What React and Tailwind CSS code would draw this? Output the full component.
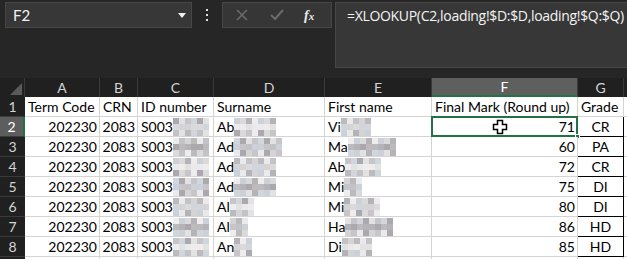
import React from 'react';

const FONT = { fontFamily: 'Lato, "Liberation Sans", sans-serif' };

const COLS = [
  { key: 'A', w: 'w-[75px]' },
  { key: 'B', w: 'w-[38px]' },
  { key: 'C', w: 'w-[76px]' },
  { key: 'D', w: 'w-[111px]' },
  { key: 'E', w: 'w-[107px]' },
  { key: 'F', w: 'w-[146px]' },
  { key: 'G', w: 'w-[46px]' },
  { key: '', w: 'w-[20px]' },
];

const MOSAIC = [
  'bg-[#d6d6da]', 'bg-[#c2bfc5]', 'bg-[#e8e8ea]', 'bg-[#aeabb1]', 'bg-[#cdd2d9]',
  'bg-[#bdbcc0]', 'bg-[#eeebec]', 'bg-[#a39fa6]', 'bg-[#d2cfd0]', 'bg-[#c7ccd4]',
  'bg-[#e1dfe0]', 'bg-[#b6b3b8]',
];

// pixelated blur that hides names
function Blur({ w, seed }) {
  const cols = Math.ceil(w / 6);
  const cells = [];
  for (let r = 0; r < 3; r++) {
    for (let c = 0; c < cols; c++) {
      cells.push(MOSAIC[(seed * 7 + r * 5 + c * 3 + ((c * r) % 4)) % MOSAIC.length]);
    }
  }
  return (
    <span className="inline-flex flex-wrap h-[18px] overflow-hidden align-middle opacity-90" style={{ width: cols * 6 }}>
      {cells.map((cls, i) => (
        <span key={i} className={`w-[6px] h-[6px] ${cls}`} />
      ))}
    </span>
  );
}

const rows = [
  { n: 2, sur: 'Ab', sw: 38, first: 'Vi', fw: 26, mark: 71, grade: 'CR' },
  { n: 3, sur: 'Ad', sw: 44, first: 'Ma', fw: 44, mark: 60, grade: 'PA' },
  { n: 4, sur: 'Ad', sw: 38, first: 'Ab', fw: 32, mark: 72, grade: 'CR' },
  { n: 5, sur: 'Ad', sw: 38, first: 'Mi', fw: 18, mark: 75, grade: 'DI' },
  { n: 6, sur: 'Al', sw: 20, first: 'Mi', fw: 32, mark: 80, grade: 'DI' },
  { n: 7, sur: 'Al', sw: 14, first: 'Ha', fw: 44, mark: 86, grade: 'HD' },
  { n: 8, sur: 'An', sw: 14, first: 'Di', fw: 30, mark: 85, grade: 'HD' },
];

function Cell({ w, className = '', children }) {
  return (
    <div className={`${w} h-full shrink-0 flex items-center border-r border-b border-[#d4d4d4] bg-white overflow-hidden whitespace-nowrap ${className}`}>
      {children}
    </div>
  );
}

function RowHead({ n, active }) {
  return (
    <div
      className={`w-[25px] h-full shrink-0 flex items-center justify-center text-[14px] border-b border-[#3a3a3a] ${
        active ? 'bg-[#5d5d5d] text-white border-r-2 border-r-[#217346]' : 'bg-[#202020] text-[#d4d4d4]'
      }`}
    >
      {n}
    </div>
  );
}

function Cursor() {
  return (
    <svg width="16" height="16" viewBox="0 0 16 16" className="absolute left-[60px] top-[2px]">
      <path
        d="M5.5 1.5h5v4h4v5h-4v4h-5v-4h-4v-5h4z"
        fill="#fff"
        stroke="#000"
        strokeWidth="1.5"
        strokeLinejoin="miter"
      />
    </svg>
  );
}

export default function App() {
  return (
    <div className="w-[627px] h-[259px] overflow-hidden bg-[#262626] text-black" style={FONT}>
      {/* toolbar */}
      <div className="flex items-start pt-[2px] h-[68px]">
        <div className="ml-[5px] w-[187px] h-[26px] shrink-0 bg-[#373737] border border-[#474747] flex items-center justify-between pl-[7px] pr-[5px]">
          <span className="text-[#f2f2f2] text-[15px]">F2</span>
          <svg width="8" height="5" viewBox="0 0 8 5"><path d="M0 0h8L4 5z" fill="#f0f0f0" /></svg>
        </div>
        <div className="w-[30px] h-[26px] shrink-0 flex flex-col items-center justify-center gap-[3px]">
          <span className="w-[2px] h-[2px] bg-[#e0e0e0]" />
          <span className="w-[2px] h-[2px] bg-[#e0e0e0]" />
          <span className="w-[2px] h-[2px] bg-[#e0e0e0]" />
        </div>
        <div className="w-[110px] h-[26px] shrink-0 bg-[#363636] border border-[#474747] flex items-center">
          <svg width="12" height="12" viewBox="0 0 12 12" className="ml-[13px]">
            <path d="M1 1l10 10M11 1L1 11" stroke="#6b6b6b" strokeWidth="1.6" />
          </svg>
          <svg width="14" height="12" viewBox="0 0 14 12" className="ml-[22px]">
            <path d="M1 6l4 4 8-9" stroke="#6b6b6b" strokeWidth="2" fill="none" />
          </svg>
          <span className="ml-[20px] text-[#ececec] text-[14px] italic font-bold" style={{ fontFamily: '"Liberation Serif", serif' }}>
            f<span className="text-[11px]">x</span>
          </span>
        </div>
        <div className="ml-[3px] flex-1 h-[66px] bg-[#373737] border border-[#474747] border-r-0 pl-[11px] pt-[2px] text-[#f4f4f4] text-[14px] whitespace-nowrap" style={{ fontFamily: '"Open Sans", sans-serif', letterSpacing: '-0.32px' }}>
          =XLOOKUP(C2,loading!$D:$D,loading!$Q:$Q)
        </div>
      </div>

      {/* grid */}
      <div className="mt-[10px]">
        <div className="flex h-[19px]">
          <div className="w-[25px] h-full shrink-0 bg-[#202020] border-r border-[#3a3a3a] relative">
            <svg width="12" height="12" viewBox="0 0 12 12" className="absolute right-[2px] bottom-[2px]">
              <path d="M12 0V12H0z" fill="#5a5a5a" />
            </svg>
          </div>
          {COLS.map((c) => (
            <div
              key={c.key + c.w}
              className={`${c.w} h-full shrink-0 flex items-center justify-center text-[14px] border-r border-[#3a3a3a] ${
                c.key === 'F' ? 'bg-[#5f5f5f] text-white border-b-2 border-b-[#217346]' : 'bg-[#202020] text-[#d4d4d4]'
              }`}
            >
              {c.key}
            </div>
          ))}
        </div>

        <div className="flex h-[20px] text-[14px]">
          <RowHead n={1} />
          <Cell w={COLS[0].w} className="pl-[3px]">Term Code</Cell>
          <Cell w={COLS[1].w} className="pl-[3px]">CRN</Cell>
          <Cell w={COLS[2].w} className="pl-[3px]">ID number</Cell>
          <Cell w={COLS[3].w} className="pl-[3px]">Surname</Cell>
          <Cell w={COLS[4].w} className="pl-[3px]">First name</Cell>
          <Cell w={COLS[5].w} className="pl-[3px]">Final Mark (Round up)</Cell>
          <Cell w={COLS[6].w} className="pl-[3px]">Grade</Cell>
          <Cell w={COLS[7].w} />
        </div>

        {rows.map((r, i) => (
          <div key={r.n} className="flex h-[20px] text-[14px]">
            <RowHead n={r.n} active={r.n === 2} />
            <Cell w={COLS[0].w} className="justify-end pr-[2px]">202230</Cell>
            <Cell w={COLS[1].w} className="justify-end pr-[2px]">2083</Cell>
            <Cell w={COLS[2].w} className="pl-[3px]">
              S003<Blur w={36} seed={i + 1} />
            </Cell>
            <Cell w={COLS[3].w} className="pl-[3px]">
              {r.sur}<Blur w={r.sw} seed={i + 3} />
            </Cell>
            <Cell w={COLS[4].w} className="pl-[3px]">
              {r.first}<Blur w={r.fw} seed={i + 5} />
            </Cell>
            <Cell w={COLS[5].w} className="justify-end pr-[2px] relative overflow-visible">
              {r.mark}
              {r.n === 2 && (
                <>
                  <div className="absolute -left-px -top-px right-[-1px] bottom-[-1px] border-2 border-[#217346]" />
                  <div className="absolute right-[-3px] bottom-[-3px] w-[5px] h-[5px] bg-[#217346] border border-white" />
                  <Cursor />
                </>
              )}
            </Cell>
            <Cell w={COLS[6].w} className="justify-center bg-[#fce4d6] border-r-black border-b-black border-l border-l-black -ml-px w-[47px]">
              {r.grade}
            </Cell>
            <Cell w={COLS[7].w} />
          </div>
        ))}
        <div className="flex h-[20px]">
          <RowHead n="" />
          {COLS.map((c) => (
            <Cell key={c.key + 'r9'} w={c.w} />
          ))}
        </div>
      </div>
    </div>
  );
}
